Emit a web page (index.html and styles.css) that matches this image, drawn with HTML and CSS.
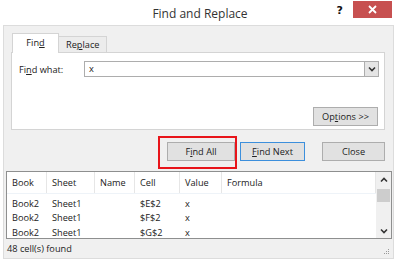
FILE: index.html
```html
<!DOCTYPE html>
<html lang="en">

<head>
    <meta charset="UTF-8">
    <title>Find and Replace</title>
    <link rel="stylesheet" href="styles.css">
</head>

<body>
    <div class="window">
        <div class="titlebar">
            <span></span>
            <span class="title">Find and Replace</span>
            <div class="controls">
                <span class="help">?</span>
                <span class="close-x">
                    <svg width="9" height="9" viewBox="0 0 9 9">
                        <path d="M1 1 L8 8 M8 1 L1 8" stroke="#fff" stroke-width="1.8" />
                    </svg>
                </span>
            </div>
        </div>

        <div class="dialog">
            <div class="tabs">
                <div class="tab active">Fin<u>d</u></div>
                <div class="tab">Re<u>p</u>lace</div>
            </div>

            <div class="panel">
                <div class="find-row">
                    <label class="label">Fi<u>n</u>d what:</label>
                    <div class="combo">
                        <span class="value">x</span>
                        <span class="drop">
                            <svg width="8" height="6" viewBox="0 0 8 6">
                                <path d="M1 1.5 L4 4.5 L7 1.5" fill="none" stroke="#333" stroke-width="1.6" />
                            </svg>
                        </span>
                    </div>
                </div>
                <div class="options-row">
                    <button class="btn options">Op<u>t</u>ions &gt;&gt;</button>
                </div>
            </div>

            <div class="actions">
                <span class="marked">
                    <button class="btn find-all">F<u>i</u>nd All</button>
                    <span class="highlight"></span>
                </span>
                <button class="btn find-next"><u>F</u>ind Next</button>
                <button class="btn close-btn">Close</button>
            </div>

            <div class="results">
                <div class="grid">
                    <div class="row head">
                        <span>Book</span><span>Sheet</span><span>Name</span><span>Cell</span><span>Value</span><span>Formula</span>
                    </div>
                    <div class="row">
                        <span>Book2</span><span>Sheet1</span><span></span><span>$E$2</span><span>x</span><span></span>
                    </div>
                    <div class="row">
                        <span>Book2</span><span>Sheet1</span><span></span><span>$F$2</span><span>x</span><span></span>
                    </div>
                    <div class="row">
                        <span>Book2</span><span>Sheet1</span><span></span><span>$G$2</span><span>x</span><span></span>
                    </div>
                </div>
                <div class="scrollbar">
                    <span class="arrow">
                        <svg width="8" height="6" viewBox="0 0 8 6">
                            <path d="M1 4.5 L4 1.5 L7 4.5" fill="none" stroke="#333" stroke-width="1.6" />
                        </svg>
                    </span>
                    <span class="thumb"></span>
                    <span class="track"></span>
                    <span class="arrow">
                        <svg width="8" height="6" viewBox="0 0 8 6">
                            <path d="M1 1.5 L4 4.5 L7 1.5" fill="none" stroke="#333" stroke-width="1.6" />
                        </svg>
                    </span>
                </div>
            </div>

            <div class="status">
                <span>48 cell(s) found</span>
                <svg class="grip" width="7" height="7" viewBox="0 0 7 7">
                    <rect x="5" y="1" width="1" height="1" fill="#9a9a9a" />
                    <rect x="3" y="3" width="1" height="1" fill="#9a9a9a" />
                    <rect x="5" y="3" width="1" height="1" fill="#9a9a9a" />
                    <rect x="1" y="5" width="1" height="1" fill="#9a9a9a" />
                    <rect x="3" y="5" width="1" height="1" fill="#9a9a9a" />
                    <rect x="5" y="5" width="1" height="1" fill="#9a9a9a" />
                </svg>
            </div>
        </div>
    </div>
</body>

</html>
```

FILE: styles.css
```css
body {
    margin: 0;
    background-color: #fff;
    font-family: "Open Sans", "Noto Sans", sans-serif;
    font-size: 9.2px;
    color: #222;
}

.window {
    width: 400px;
    height: 263px;
    overflow: hidden;
}

.titlebar {
    height: 25px;
    display: grid;
    grid-template-columns: 1fr auto 1fr;
    align-items: start;
}

.title {
    font-size: 12px;
    color: #333;
    padding-top: 5px;
}

.controls {
    display: flex;
    justify-content: flex-end;
    align-items: flex-start;
    padding-right: 8px;
}

.help {
    font-family: "DejaVu Sans", sans-serif;
    font-weight: bold;
    font-size: 11px;
    color: #111;
    margin-top: 4px;
    margin-right: 10px;
}

.close-x {
    width: 39px;
    height: 17px;
    margin-top: 1px;
    background-color: #c75050;
    display: flex;
    align-items: center;
    justify-content: center;
}

.dialog {
    margin: 0 6px 0 3px;
    height: 232px;
    background-color: #f0f0f0;
    border: 1px solid #dcdcdc;
    display: flex;
    flex-direction: column;
}

.tabs {
    display: flex;
    align-items: flex-end;
    margin-top: 7px;
    margin-left: 8px;
    height: 19px;
    position: relative;
    z-index: 1;
}

.tab {
    height: 15px;
    padding: 0 7px;
    display: flex;
    align-items: center;
    border: 1px solid #d4d4d4;
    border-bottom: none;
    background-color: #ececec;
    margin-left: -1px;
}

.tab.active {
    width: 47px;
    height: 20px;
    padding: 0;
    justify-content: center;
    background-color: #fff;
    margin-left: 0;
    margin-bottom: -1px;
    padding-bottom: 2px;
    box-sizing: border-box;
}

.panel {
    margin-left: 7px;
    width: 374px;
    height: 78px;
    box-sizing: border-box;
    background-color: #fff;
    border: 1px solid #d4d4d4;
    padding: 8px 5px 3px 7px;
    display: flex;
    flex-direction: column;
    justify-content: space-between;
}

.find-row {
    display: flex;
    align-items: center;
}

.label {
    width: 65px;
}

.combo {
    flex: 1;
    height: 16px;
    box-sizing: border-box;
    border: 1px solid #adadad;
    display: flex;
    align-items: center;
}

.value {
    flex: 1;
    padding-left: 4px;
    padding-bottom: 2px;
}

.drop {
    width: 13px;
    height: 14px;
    background-color: #e5e5e5;
    border-left: 1px solid #adadad;
    display: flex;
    align-items: center;
    justify-content: center;
}

.options-row {
    display: flex;
    justify-content: flex-end;
    padding-right: 1px;
}

.btn {
    font-family: "Open Sans", "Noto Sans", sans-serif;
    font-size: 9.2px;
    color: #222;
    height: 19px;
    padding: 0;
    background-color: #e1e1e1;
    border: 1px solid #adadad;
}

.options {
    width: 65px;
}

.actions {
    display: flex;
    align-items: center;
    margin-top: 12px;
    padding-left: 163px;
}

.marked {
    position: relative;
    display: flex;
}

.find-all {
    width: 68px;
}

.highlight {
    position: absolute;
    left: -9px;
    top: -6px;
    right: -2px;
    bottom: -8px;
    border: 2px solid #e8141a;
}

.find-next {
    width: 65px;
    margin-left: 5px;
    border-color: #3c8fdc;
}

.close-btn {
    width: 63px;
    margin-left: 17px;
}

.results {
    margin-top: 10px;
    margin-left: 2px;
    width: 386px;
    height: 68px;
    box-sizing: border-box;
    background-color: #fff;
    border: 1px solid #8e8f8f;
    display: flex;
}

.grid {
    flex: 1;
}

.row {
    display: grid;
    grid-template-columns: 40px 48px 40px 45px 42px 1fr;
    height: 14.5px;
    align-items: center;
}

.row span {
    padding-left: 5px;
}

.row.head {
    height: 21px;
    margin-bottom: 2px;
    border-bottom: 1px solid #eef3f8;
}

.row.head span {
    height: 21px;
    line-height: 21px;
    border-right: 1px solid #e6e6e6;
}

.scrollbar {
    width: 15px;
    background-color: #f0f0f0;
    display: flex;
    flex-direction: column;
    align-items: center;
}

.arrow {
    height: 15px;
    width: 15px;
    display: flex;
    align-items: center;
    justify-content: center;
}

.thumb {
    width: 13px;
    height: 13px;
    margin-top: 2px;
    background-color: #cdcdcd;
}

.track {
    flex: 1;
}

.status {
    flex: 1;
    display: flex;
    align-items: center;
    justify-content: space-between;
    padding: 0 3px 0 3px;
}

.grip {
    margin-top: 6px;
}
```
